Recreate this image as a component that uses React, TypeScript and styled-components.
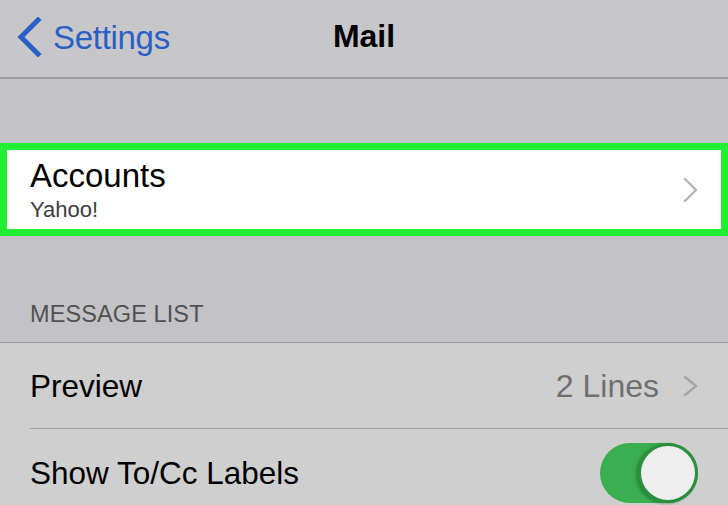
import React from "react";
import styled, { createGlobalStyle } from "styled-components";

const Global = createGlobalStyle`
  html, body { margin: 0; padding: 0; }
  body {
    background: #c3c2c7;
    font-family: "Liberation Sans", Arial, sans-serif;
    width: 728px;
    height: 505px;
    overflow: hidden;
  }
`;

const Screen = styled.div`
  width: 728px;
  height: 505px;
  overflow: hidden;
  display: flex;
  flex-direction: column;
  background: #c3c2c7;
`;

const NavBar = styled.header`
  position: relative;
  height: 79px;
  flex: none;
  box-sizing: border-box;
  padding-top: 17px;
  background: #c7c7c9;
  border-bottom: 2px solid #9c9c9e;
  display: flex;
  justify-content: center;
  align-items: flex-start;
`;

const BackButton = styled.div`
  position: absolute;
  left: 16px;
  top: 17px;
  display: flex;
  align-items: center;
  gap: 11px;
  color: #2a5fc5;
  font-size: 33px;
  line-height: 39px;
  letter-spacing: -0.3px;
`;

const Title = styled.div`
  font-size: 32px;
  line-height: 39px;
  font-weight: bold;
  color: #000;
`;

const Spacer = styled.div<{ $h: number }>`
  height: ${(p) => p.$h}px;
  flex: none;
`;

const HighlightCell = styled.div`
  flex: none;
  height: 93px;
  box-sizing: border-box;
  border: 7px solid #22ef34;
  background: #ffffff;
  display: flex;
  align-items: center;
  padding: 0 23px 0 23px;
`;

const CellText = styled.div`
  flex: 1;
  display: flex;
  flex-direction: column;
`;

const CellTitle = styled.div`
  font-size: 33px;
  line-height: 40px;
  color: #000;
  margin-top: 0px;
`;

const CellSubtitle = styled.div`
  font-size: 22px;
  line-height: 26px;
  color: #3e3e3e;
  margin-top: 1px;
`;

const SectionHeader = styled.div`
  flex: none;
  height: 106px;
  box-sizing: border-box;
  display: flex;
  align-items: flex-end;
  padding: 0 0 13px 30px;
  font-size: 23.5px;
  line-height: 29px;
  color: #515151;
  letter-spacing: 0.1px;
`;

const Group = styled.div`
  flex: none;
  border-top: 1px solid #9b9b9d;
  background: #cfcfcf;
  padding-left: 30px;
`;

const Row = styled.div<{ $h: number; $divider?: boolean }>`
  height: ${(p) => p.$h}px;
  box-sizing: border-box;
  display: flex;
  align-items: center;
  padding-right: 30px;
  border-bottom: ${(p) => (p.$divider ? "1px solid #a3a3a3" : "none")};
`;

const RowLabel = styled.div`
  flex: 1;
  font-size: 31.5px;
  line-height: 38px;
  color: #000;
`;

const RowValue = styled.div`
  font-size: 32px;
  line-height: 38px;
  color: #6f6f6f;
  margin-right: 24px;
`;

const Toggle = styled.div<{ $on: boolean }>`
  position: relative;
  width: 98px;
  height: 60px;
  border-radius: 30px;
  background: ${(p) => (p.$on ? "#3aae50" : "#e5e5e5")};
  flex: none;
`;

const Knob = styled.div`
  position: absolute;
  right: 0;
  top: 0;
  width: 60px;
  height: 60px;
  box-sizing: border-box;
  border-radius: 50%;
  background: #eeeeee;
  border: 3px solid #2c8f40;
  box-shadow: -2px 1px 3px rgba(0, 60, 10, 0.35);
`;

const Chevron = ({ color, w, h }: { color: string; w: number; h: number }) => (
  <svg width={w} height={h} viewBox={`0 0 ${w} ${h}`} fill="none">
    <polyline
      points={`2,2 ${w - 2},${h / 2} 2,${h - 2}`}
      stroke={color}
      strokeWidth={2.4}
      strokeLinecap="round"
      strokeLinejoin="round"
    />
  </svg>
);

const BackChevron = () => (
  <svg width="26" height="40" viewBox="0 0 26 40" fill="none">
    <polyline
      points="22,3 5,20 22,37"
      stroke="#2a5fc5"
      strokeWidth={5}
      strokeLinecap="square"
      strokeLinejoin="miter"
    />
  </svg>
);

export default function App() {
  return (
    <>
      <Global />
      <Screen>
        <NavBar>
          <BackButton>
            <BackChevron />
            <span>Settings</span>
          </BackButton>
          <Title>Mail</Title>
        </NavBar>
        <Spacer $h={64} />
        <HighlightCell>
          <CellText>
            <CellTitle>Accounts</CellTitle>
            <CellSubtitle>Yahoo!</CellSubtitle>
          </CellText>
          <Chevron color="#b4b4b6" w={15} h={26} />
        </HighlightCell>
        <SectionHeader>MESSAGE LIST</SectionHeader>
        <Group>
          <Row $h={86} $divider>
            <RowLabel>Preview</RowLabel>
            <RowValue>2 Lines</RowValue>
            <Chevron color="#a5a5a7" w={15} h={22} />
          </Row>
          <Row $h={88}>
            <RowLabel>Show To/Cc Labels</RowLabel>
            <Toggle $on>
              <Knob />
            </Toggle>
          </Row>
        </Group>
      </Screen>
    </>
  );
}
